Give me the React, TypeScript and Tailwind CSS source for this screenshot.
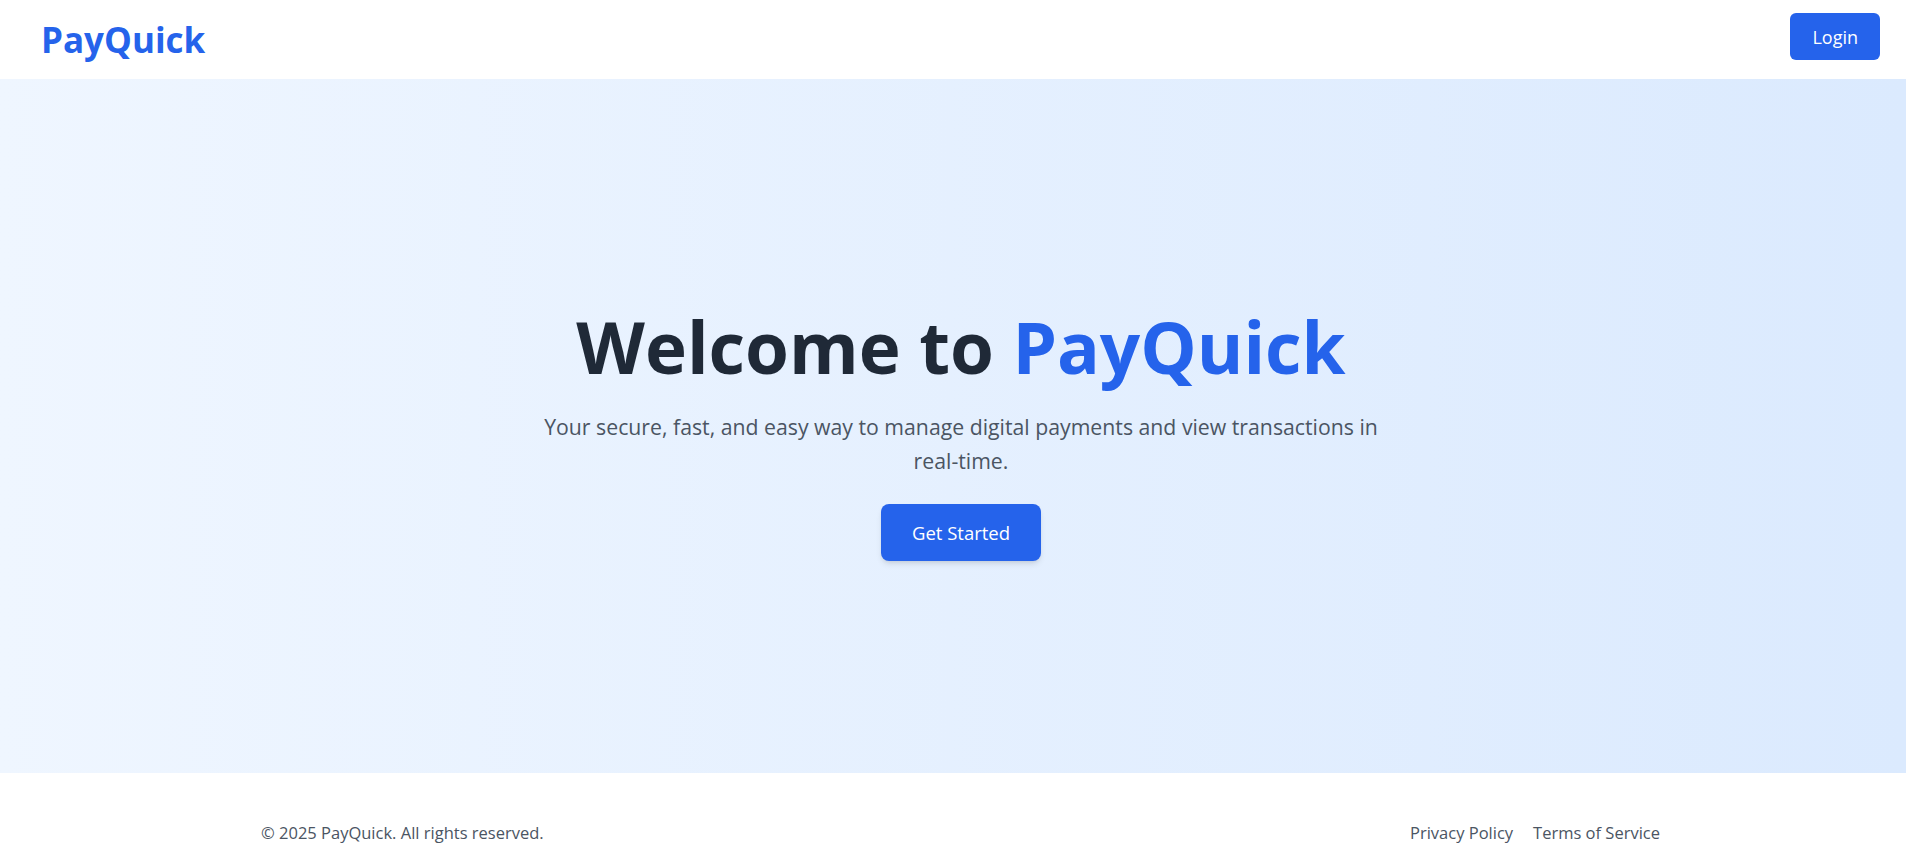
import React from "react";

export default function App() {
  return (
    <div className="min-h-screen flex flex-col bg-white font-['Segoe_UI','Open_Sans',sans-serif]">
      <header className="h-[79px] flex items-center justify-between pl-[41px] pr-[26px] bg-white">
        <div className="text-[35px] font-bold text-[#2563eb] leading-none">PayQuick</div>
        <button className="self-start mt-[13px] h-[47px] px-[22px] rounded-md bg-[#2563eb] text-white text-lg">Login</button>
      </header>
      <main className="h-[694px] pt-[20px] pl-[16px] flex flex-col items-center justify-center bg-gradient-to-r from-[#eff6ff] to-[#dbeafe] text-center">
        <h1 className="text-[71px] font-bold leading-none text-[#1f2937]">
          Welcome to <span className="text-[#2563eb]">PayQuick</span>
        </h1>
        <p className="mt-7 max-w-[870px] text-[21.25px] leading-[34px] text-[#4b5563]">
          Your secure, fast, and easy way to manage digital payments and view transactions in{" "}
          <span className="whitespace-nowrap">real-time.</span>
        </p>
        <button className="mt-[26px] w-[160px] h-[57px] rounded-lg bg-[#2563eb] text-white text-[18.5px] shadow-md">
          Get Started
        </button>
      </main>
      <footer className="bg-white py-12">
        <div className="flex items-center justify-between ml-[261px] mr-[246px] text-[16.5px] text-[#4b5563]">
          <span>© 2025 PayQuick. All rights reserved.</span>
          <div className="flex gap-5">
            <a>Privacy Policy</a>
            <a>Terms of Service</a>
          </div>
        </div>
      </footer>
    </div>
  );
}
